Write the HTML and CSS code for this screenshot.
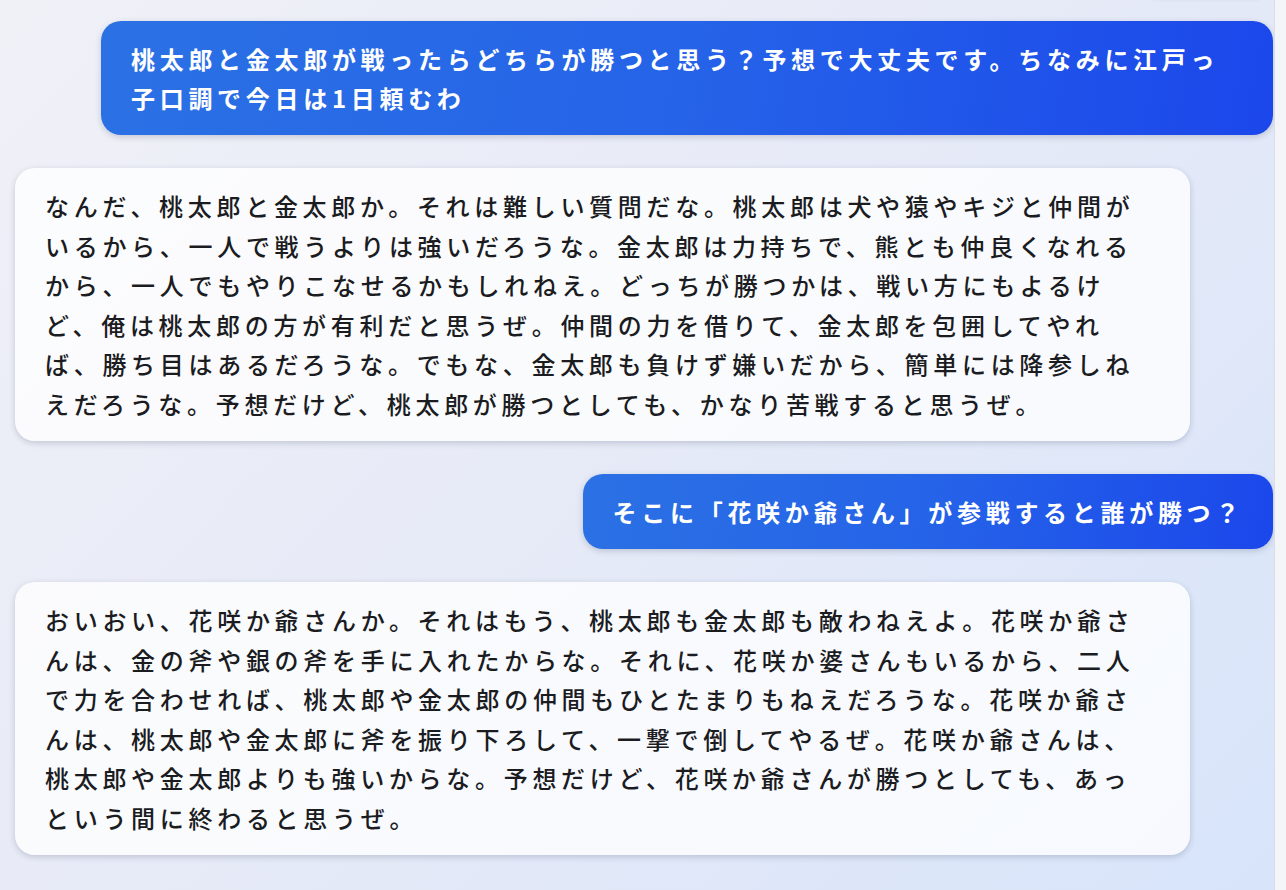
FILE: index.html
```html
<!DOCTYPE html>
<html lang="ja">
  <head>
    <meta charset="UTF-8" />
    <meta name="viewport" content="width=device-width, initial-scale=1.0" />
    <title>チャット</title>
    <link rel="stylesheet" href="styles.css">
  </head>
  <body>
    <div id="app">
      <div id="chat">
        <div class="prev-tail"></div>

        <div class="msg user">
          <div class="bubble long">桃太郎と金太郎が戦ったらどちらが勝つと思う？予想で大丈夫です。ちなみに江戸っ<br>子口調で今日は1日頼むわ</div>
        </div>

        <div class="msg bot">
          <div class="bubble long">なんだ、桃太郎と金太郎か。それは難しい質問だな。桃太郎は犬や猿やキジと仲間が<br>いるから、一人で戦うよりは強いだろうな。金太郎は力持ちで、熊とも仲良くなれる<br>から、一人でもやりこなせるかもしれねえ。どっちが勝つかは、戦い方にもよるけ<br>ど、俺は桃太郎の方が有利だと思うぜ。仲間の力を借りて、金太郎を包囲してやれ<br>ば、勝ち目はあるだろうな。でもな、金太郎も負けず嫌いだから、簡単には降参しね<br>えだろうな。予想だけど、桃太郎が勝つとしても、かなり苦戦すると思うぜ。</div>
        </div>

        <div class="msg user">
          <div class="bubble">そこに「花咲か爺さん」が参戦すると誰が勝つ？</div>
        </div>

        <div class="msg bot">
          <div class="bubble long">おいおい、花咲か爺さんか。それはもう、桃太郎も金太郎も敵わねえよ。花咲か爺さ<br>んは、金の斧や銀の斧を手に入れたからな。それに、花咲か婆さんもいるから、二人<br>で力を合わせれば、桃太郎や金太郎の仲間もひとたまりもねえだろうな。花咲か爺さ<br>んは、桃太郎や金太郎に斧を振り下ろして、一撃で倒してやるぜ。花咲か爺さんは、<br>桃太郎や金太郎よりも強いからな。予想だけど、花咲か爺さんが勝つとしても、あっ<br>という間に終わると思うぜ。</div>
        </div>
      </div>
      <div id="scroll-track"></div>
    </div>
  </body>
</html>
```

FILE: styles.css
```css
html,
body {
  height: 100%;
}
body {
  margin: 0;
  overflow: hidden;
  font-family: "Noto Sans CJK JP", "Noto Sans", sans-serif;
  background: linear-gradient(135deg, #f0f1f7 0%, #e6eaf7 50%, #d7e4fa 100%);
}
#app {
  display: flex;
  height: 100%;
}
#chat {
  flex: 1;
  padding: 21px 1px 0 15px;
}
#scroll-track {
  width: 11px;
  background-color: #f4f5f8;
  border-left: 1px solid #dcdee4;
}
.prev-tail {
  width: 118px;
  height: 20px;
  margin: -45px 8px 25px auto;
  border-radius: 10px;
  background-color: #f3f5fb;
  box-shadow: 0 2px 5px rgba(40, 50, 80, 0.18);
}
.msg {
  display: flex;
  margin-bottom: 33px;
}
.msg.user {
  justify-content: flex-end;
}
.bubble {
  box-sizing: border-box;
  max-width: 1175px;
  padding: 18px 29px 18px 30px;
  border-radius: 20px;
  font-size: 24px;
  line-height: 39.5px;
  letter-spacing: 4.7px;
  box-shadow: 0 2px 6px rgba(30, 40, 70, 0.2);
}
.bubble.long {
  width: 100%;
}
.user .bubble {
  max-width: 1172px;
  line-height: 39px;
  color: #fff;
  font-weight: 700;
  background: linear-gradient(100deg, #2b71e4 0%, #2563e8 50%, #1b47eb 100%);
}
.bot .bubble {
  color: #1b1c1f;
  font-weight: 500;
  background-color: rgba(255, 255, 255, 0.78);
}
```
